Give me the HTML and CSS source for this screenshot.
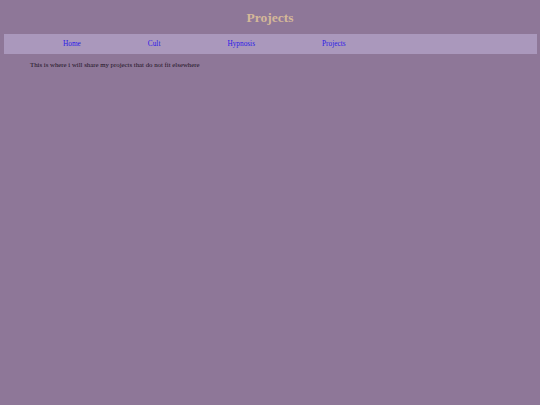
FILE: index.html
```html
<!DOCTYPE html>
<html>
<head>
<meta charset="utf-8">
<title>Projects</title>
<link rel="stylesheet" href="styles.css">
</head>
<body>
<h1 class="title">Projects</h1>
<nav class="nav">
  <ul class="nav-list">
    <li class="nav-item"><a class="nav-link" href="#">Home</a></li>
    <li class="nav-item"><a class="nav-link" href="#">Cult</a></li>
    <li class="nav-item"><a class="nav-link" href="#">Hypnosis</a></li>
    <li class="nav-item"><a class="nav-link" href="#">Projects</a></li>
  </ul>
</nav>
<p class="intro">This is where i will share my projects that do not fit elsewhere</p>
</body>
</html>
```
FILE: styles.css
```css
html, body {
  margin: 0;
  padding: 0;
}
body {
  background: #8e7798;
  font-family: "Liberation Serif", "Times New Roman", serif;
  padding: 0 3.5px;
  min-height: 405px;
  box-sizing: border-box;
}
.title {
  margin: 0;
  padding-top: 10px;
  height: 24px;
  line-height: 15px;
  font-size: 13.5px;
  font-weight: bold;
  text-align: center;
  color: #d4b898;
}
.nav {
  background: #aa98bc;
  height: 20px;
  box-sizing: border-box;
  padding-top: 6px;
}
.nav-list {
  list-style: none;
  margin: 0;
  padding: 0 0 0 26px;
  display: flex;
}
.nav-item {
  padding: 0 33.5px;
  font-size: 7.3px;
  line-height: 8.4px;
}
.nav-link {
  color: #2a18e6;
  text-decoration: none;
}
.intro {
  margin: 6.5px 0 0;
  padding-left: 26.5px;
  font-size: 6.8px;
  line-height: 8px;
  color: #1c1224;
}
```
